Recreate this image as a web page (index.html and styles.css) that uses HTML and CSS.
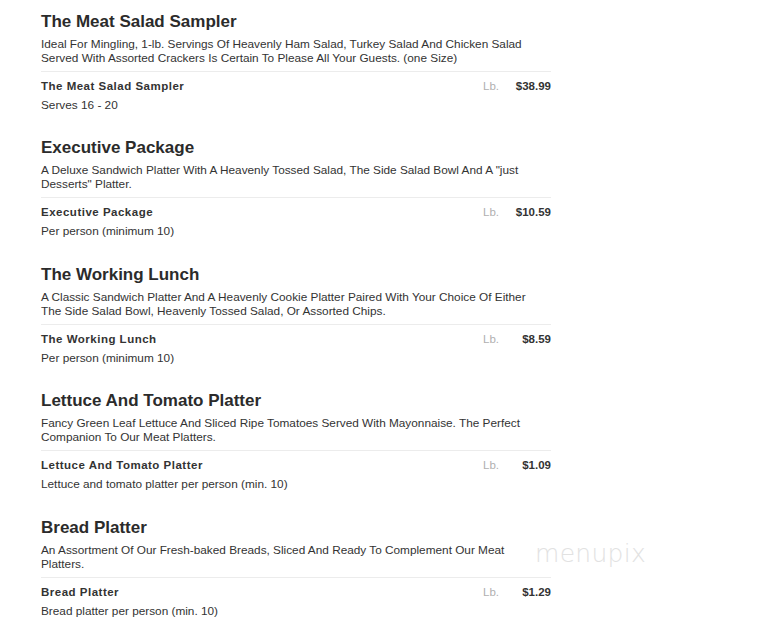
FILE: index.html
```html
<!DOCTYPE html>
<html>
<head>
<meta charset="utf-8">
<link rel="stylesheet" href="styles.css">
</head>
<body>
<div class="menu">
  <section class="dish">
    <h2 class="title">The Meat Salad Sampler</h2>
    <p class="desc">Ideal For Mingling, 1-lb. Servings Of Heavenly Ham Salad, Turkey Salad And Chicken Salad Served With Assorted Crackers Is Certain To Please All Your Guests. (one Size)</p>
    <div class="row"><span class="name">The Meat Salad Sampler</span><span class="unit">Lb.</span><span class="price">$38.99</span></div>
    <p class="sub">Serves 16 - 20</p>
  </section>
  <section class="dish">
    <h2 class="title">Executive Package</h2>
    <p class="desc">A Deluxe Sandwich Platter With A Heavenly Tossed Salad, The Side Salad Bowl And A "just Desserts" Platter.</p>
    <div class="row"><span class="name">Executive Package</span><span class="unit">Lb.</span><span class="price">$10.59</span></div>
    <p class="sub">Per person (minimum 10)</p>
  </section>
  <section class="dish">
    <h2 class="title">The Working Lunch</h2>
    <p class="desc">A Classic Sandwich Platter And A Heavenly Cookie Platter Paired With Your Choice Of Either The Side Salad Bowl, Heavenly Tossed Salad, Or Assorted Chips.</p>
    <div class="row"><span class="name">The Working Lunch</span><span class="unit">Lb.</span><span class="price">$8.59</span></div>
    <p class="sub">Per person (minimum 10)</p>
  </section>
  <section class="dish">
    <h2 class="title">Lettuce And Tomato Platter</h2>
    <p class="desc">Fancy Green Leaf Lettuce And Sliced Ripe Tomatoes Served With Mayonnaise. The Perfect Companion To Our Meat Platters.</p>
    <div class="row"><span class="name">Lettuce And Tomato Platter</span><span class="unit">Lb.</span><span class="price">$1.09</span></div>
    <p class="sub">Lettuce and tomato platter per person (min. 10)</p>
  </section>
  <section class="dish">
    <h2 class="title">Bread Platter</h2>
    <p class="desc">An Assortment Of Our Fresh-baked Breads, Sliced And Ready To Complement Our Meat Platters.</p>
    <div class="row"><span class="name">Bread Platter</span><span class="unit">Lb.</span><span class="price">$1.29</span></div>
    <p class="sub">Bread platter per person (min. 10)</p>
  </section>
</div>
<div class="watermark">menupix</div>
</body>
</html>
```
FILE: styles.css
```css
html, body {
  margin: 0;
  padding: 0;
  background: #fff;
}
body {
  font-family: "Liberation Sans", Arial, sans-serif;
  color: #333;
  position: relative;
  width: 770px;
  height: 634px;
  overflow: hidden;
}
.menu {
  width: 510px;
  padding: 11.6px 0 0 41px;
  display: flex;
  flex-direction: column;
  gap: 26.5px;
}
.dish {
  display: flex;
  flex-direction: column;
}
.title {
  margin: 0;
  font-size: 17px;
  line-height: 20px;
  font-weight: bold;
  color: #2b2b2b;
}
.desc {
  margin: 5px 0 0;
  font-size: 11.8px;
  line-height: 14px;
  color: #333;
  padding: 0 10px 6px 0;
  border-bottom: 1px solid #ececec;
}
.row {
  display: flex;
  align-items: center;
  margin-top: 7px;
  font-size: 11.5px;
  line-height: 14px;
}
.name {
  flex: 1;
  font-weight: bold;
  letter-spacing: 0.5px;
  color: #333;
}
.unit {
  color: #b0b0b0;
  width: 16px;
}
.price {
  font-weight: bold;
  color: #333;
  text-align: right;
  width: 52px;
}
.sub {
  margin: 5px 0 0;
  font-size: 11.8px;
  line-height: 14px;
  color: #333;
}
.watermark {
  position: absolute;
  left: 535px;
  top: 539px;
  font-family: "DejaVu Sans", sans-serif;
  font-weight: 200;
  font-size: 25px;
  color: #e2e2e2;
  letter-spacing: 0.3px;
}
```
